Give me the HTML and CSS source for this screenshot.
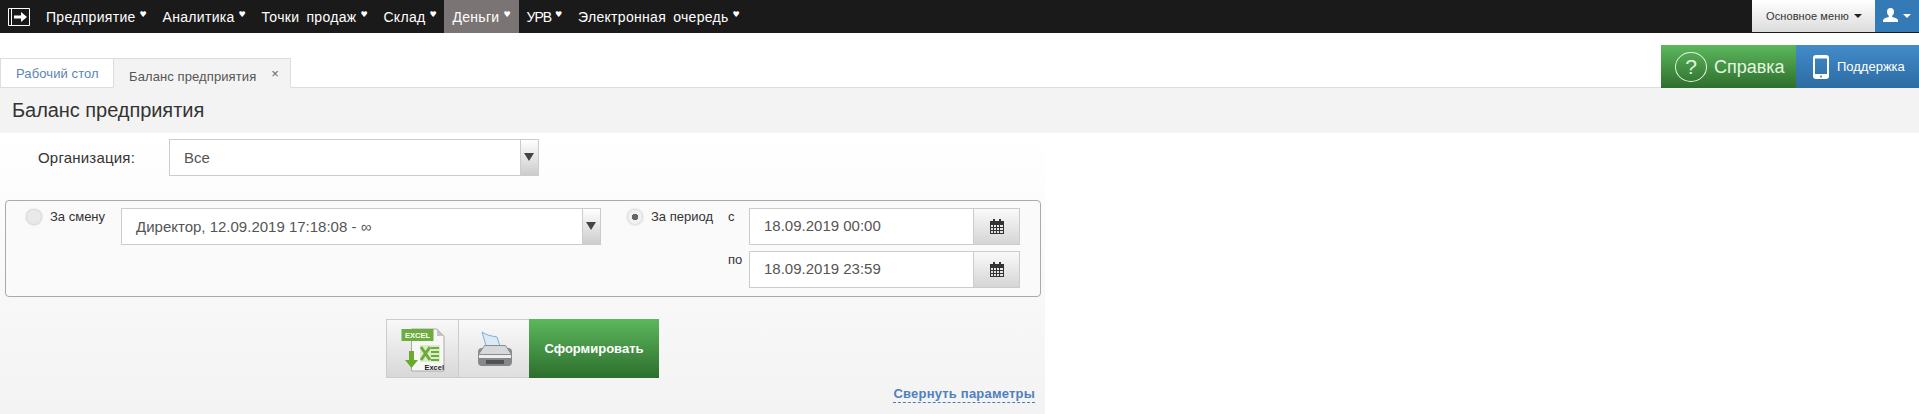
FILE: index.html
```html
<!DOCTYPE html>
<html lang="ru">
<head>
    <meta charset="UTF-8">
    <title>Баланс предприятия</title>
    <link rel="stylesheet" href="styles.css">
</head>
<body>
    <nav class="navbar">
        <a class="nav-logo">
            <svg width="22" height="18" viewBox="0 0 22 18">
                <path d="M.5.5h21v17H.5zM3.500.5v17" fill="none" stroke="#fff"/>
                <path d="M6 7.500h7V4l6 5-6 5v-3.500H6z" fill="#fff"/>
            </svg>
        </a>
        <ul class="nav-menu">
            <li class="nav-item">Предприятие</li>
            <li class="nav-item">Аналитика</li>
            <li class="nav-item">Точки продаж</li>
            <li class="nav-item">Склад</li>
            <li class="nav-item active">Деньги</li>
            <li class="nav-item nav-item-short">УРВ</li>
            <li class="nav-item">Электронная очередь</li>
        </ul>
        <button class="main-menu-btn">Основное меню<span class="caret-down"></span></button>
        <button class="user-btn">
            <svg width="15" height="14" viewBox="0 0 15 14">
                <path d="M7.500 0c2.300 0 3.500 1.700 3.500 3.800 0 1.800-.8 3.200-1.800 4v1.300c2 .5 5.300 1.300 5.800 3V14H0v-1.900c.5-1.700 3.800-2.500 5.800-3V7.800c-1-.8-1.800-2.200-1.800-4C4 1.700 5.200 0 7.500 0z" fill="#fff"/>
            </svg>
            <span class="caret-down light"></span>
        </button>
    </nav>

    <div class="tabbar">
        <div class="tabs">
            <a class="tab tab-home">Рабочий стол</a>
            <a class="tab tab-current">Баланс предприятия<span class="tab-close">×</span></a>
        </div>
        <div class="help-links">
            <a class="help-btn">
                <span class="help-circle">?</span>Справка
            </a>
            <a class="support-btn">
                <svg width="16" height="24" viewBox="0 0 16 24">
                    <path d="M3 0h10a3 3 0 0 1 3 3v18a3 3 0 0 1-3 3H3a3 3 0 0 1-3-3V3a3 3 0 0 1 3-3zM2 3.500v15.500h12V3.500z" fill="#fff" fill-rule="evenodd"/>
                    <circle cx="8" cy="21.500" r="1" fill="#337ab7"/>
                </svg>
                Поддержка
            </a>
        </div>
    </div>

    <h1 class="page-title">Баланс предприятия</h1>

    <main class="panel">
        <div class="org-row">
            <label class="org-label">Организация:</label>
            <div class="combo org-combo">
                <span class="combo-text">Все</span>
                <span class="combo-arrow"></span>
            </div>
        </div>

        <div class="period-box">
            <span class="radio"></span>
            <span class="radio-label shift-label">За смену</span>
            <div class="combo shift-combo">
                <span class="combo-text">Директор, 12.09.2019 17:18:08 - ∞</span>
                <span class="combo-arrow"></span>
            </div>
            <span class="radio checked"></span>
            <span class="radio-label period-label">За период</span>
            <div class="date-rows">
                <div class="date-row">
                    <span class="date-prefix">с</span>
                    <div class="date-field">
                        <span class="date-value">18.09.2019 00:00</span>
                        <span class="date-btn">
                            <svg width="14" height="15" viewBox="0 0 14 15">
                                <use href="#calendar"/>
                            </svg>
                        </span>
                    </div>
                </div>
                <div class="date-row">
                    <span class="date-prefix">по</span>
                    <div class="date-field">
                        <span class="date-value">18.09.2019 23:59</span>
                        <span class="date-btn">
                            <svg width="14" height="15" viewBox="0 0 14 15">
                                <use href="#calendar"/>
                            </svg>
                        </span>
                    </div>
                </div>
            </div>
        </div>

        <div class="actions">
            <button class="action-btn excel-btn">
                <svg width="46" height="46" viewBox="0 0 46 46">
                    <path d="M11.500 3H37l7 7v35H11.500z" fill="#f7f7f7" stroke="#a9a9a9"/>
                    <path d="M37 3v7h7z" fill="#c4c4c4"/>
                    <path d="M1.500 3h32v12h-32z" fill="#6cae3e"/>
                    <text x="17.500" y="12" class="excel-tag">EXCEL</text>
                    <rect x="20" y="19" width="20" height="17" fill="#dbeccb"/>
                    <path d="M21 34l9-13M21 21l9 13" stroke="#6aab3c" stroke-width="3"/>
                    <path d="M31 22h8M31 26h8M31 30h8M31 34h8" stroke="#6aab3c" stroke-width="2"/>
                    <path d="M9 25h5v9h4l-6.500 8L5 34h4z" fill="#6aab2e"/>
                    <text x="44" y="44" class="excel-name">Excel</text>
                </svg>
            </button>
            <button class="action-btn print-btn">
                <svg width="34" height="36" viewBox="0 0 34 36">
                    <path d="M4 1c4 3 9 4 15 5l4 12H9z" fill="#dbeaf7" stroke="#7fb0d8"/>
                    <rect x="0" y="17" width="34" height="18" rx="4" fill="#85898c"/>
                    <path d="M6.500 14.500h21l6 9H.5z" fill="#d6d8d9" stroke="#8a8d90"/>
                    <rect x="1" y="24" width="32" height="3" fill="#eeeeee"/>
                    <rect x="8" y="29" width="18" height="4" fill="#4f5356"/>
                </svg>
            </button>
            <button class="action-btn submit-btn">Сформировать</button>
        </div>

        <div class="collapse-row">
            <a class="collapse-link">Свернуть параметры</a>
        </div>
    </main>

    <svg class="svg-defs" width="0" height="0">
        <symbol id="calendar" viewBox="0 0 14 15">
            <path d="M0 2h3V0h2v2h4V0h2v2h3v13H0zM1 6v2h2V6zM4 6v2h2V6zM7 6v2h2V6zM10 6v2h3V6zM1 9v2h2V9zM4 9v2h2V9zM7 9v2h2V9zM10 9v2h3V9zM1 12v2h2v-2zM4 12v2h2v-2zM7 12v2h2v-2zM10 12v2h3v-2z" fill="#333" fill-rule="evenodd"/>
        </symbol>
    </svg>
</body>
</html>
```

FILE: styles.css
```css
* { box-sizing: border-box; }

body {
    margin: 0;
    font-family: "Liberation Sans", Arial, sans-serif;
    background: #fff;
    color: #333;
}

/* top bar */
.navbar {
    display: flex;
    align-items: stretch;
    height: 33px;
    background: #1a1a1a;
}

.nav-logo {
    display: flex;
    align-items: center;
    padding-left: 8px;
    width: 38px;
}

.nav-menu {
    display: flex;
    flex: 1;
    list-style: none;
    margin: 0;
    padding: 0;
}

.nav-item {
    display: flex;
    align-items: center;
    padding: 0 8px;
    color: #fff;
    font-size: 14px;
    letter-spacing: 0.3px;
    word-spacing: 3px;
    white-space: nowrap;
}

.nav-item::after {
    content: "♥";
    width: 7px;
    margin: -5px 0 0 4px;
    font-family: "DejaVu Sans", sans-serif;
    font-size: 8px;
    letter-spacing: 0;
}

.nav-item.active { background: #7a7574; }
.nav-item-short { letter-spacing: -1px; }

.main-menu-btn {
    width: 123px;
    height: 32px;
    padding: 0 0 0 14px;
    border: 0;
    background: linear-gradient(to bottom, #fff, #dcdcdc);
    color: #333;
    font: 11px "Liberation Sans", Arial, sans-serif;
    letter-spacing: 0.1px;
    text-align: left;
}

.caret-down {
    display: inline-block;
    margin-left: 5px;
    vertical-align: 2px;
    border-left: 4px solid transparent;
    border-right: 4px solid transparent;
    border-top: 4px solid #222;
}

.caret-down.light {
    margin-left: 2px;
    vertical-align: 4px;
    border-top-color: #fff;
}

.user-btn {
    width: 44px;
    height: 32px;
    padding: 0;
    border: 0;
    background: #337ab7;
}

/* tabs */
.tabbar {
    display: flex;
    justify-content: space-between;
    align-items: flex-end;
    height: 55px;
    border-bottom: 1px solid #ddd;
}

.tabs { display: flex; margin-bottom: -1px; }

.tab {
    display: block;
    height: 30px;
    padding-top: 7px;
    border: 1px solid #ddd;
    font-size: 13px;
    letter-spacing: 0.1px;
    white-space: nowrap;
}

.tab-home {
    width: 114px;
    padding-left: 15px;
    color: #5b85b0;
    background: #fff;
}

.tab-current {
    width: 178px;
    margin-left: -1px;
    padding-left: 15px;
    color: #555;
    background: #f3f3f3;
    border-bottom-color: #f3f3f3;
}

.tab-close {
    margin-left: 15px;
    color: #666;
    font-size: 13px;
    vertical-align: 3px;
}

.help-links { display: flex; height: 43px; margin-bottom: -1px; }

.help-btn {
    display: flex;
    align-items: center;
    width: 135px;
    padding: 1px 0 0 14px;
    background: linear-gradient(to bottom, #5cb85c, #2d6e2d);
    color: #e6f5e0;
    font-size: 18px;
}

.help-circle {
    width: 32px;
    height: 30px;
    margin-right: 7px;
    border: 1px solid #e6f5e0;
    border-radius: 50%;
    font-size: 21px;
    line-height: 28px;
    text-align: center;
}

.support-btn {
    display: flex;
    align-items: center;
    width: 123px;
    padding-left: 17px;
    background: linear-gradient(to bottom, #428bca, #2d6ca2);
    color: #fff;
    font-size: 13px;
    gap: 8px;
}

/* page */
.page-title {
    height: 45px;
    margin: 0;
    padding: 11px 12px 0;
    background: #f3f3f3;
    color: #333;
    font-size: 20px;
    font-weight: 400;
    letter-spacing: -0.05px;
}

.panel {
    width: 1045px;
    height: 281px;
    padding-top: 6px;
    background: linear-gradient(to bottom, #fff, #f3f3f3);
}

.org-row { display: flex; align-items: center; padding-left: 38px; }

.org-label { width: 131px; font-size: 15px; letter-spacing: 0.2px; }

.combo {
    display: flex;
    height: 37px;
    border: 1px solid #ccc;
    background: #fff;
}

.org-combo { width: 370px; }
.shift-combo { width: 480px; margin-left: 15px; }

.combo-text {
    flex: 1;
    padding: 9px 0 0 14px;
    color: #555;
    font-size: 15px;
    white-space: nowrap;
}

.combo-arrow {
    position: relative;
    width: 18px;
    background: linear-gradient(to bottom, #fff, #ccc);
    border-left: 1px solid #ccc;
}

.combo-arrow::after {
    content: "";
    position: absolute;
    top: 13px;
    left: 3px;
    border-left: 5px solid transparent;
    border-right: 5px solid transparent;
    border-top: 8px solid #444;
}

.period-box {
    display: flex;
    align-items: flex-start;
    width: 1036px;
    height: 97px;
    margin: 24px 0 0 5px;
    padding: 7px 0 0 20px;
    border: 1px solid #aaa;
    border-radius: 4px;
    background: #fafafa;
}

.radio {
    flex: none;
    width: 16px;
    height: 16px;
    margin-top: 1px;
    border: 1px solid #ddd;
    border-radius: 50%;
    background: #e9e9e9;
    box-shadow: 0 0 2px #ccc;
}

.radio.checked {
    margin-left: 26px;
    background: radial-gradient(circle, #666 0, #666 3px, #f1f1f1 3.500px);
}

.radio-label { margin: 1px 0 0 8px; font-size: 13px; white-space: nowrap; }
.shift-label { width: 56px; }
.period-label { width: 63px; }

.date-rows { display: flex; flex-direction: column; gap: 6px; margin-left: 14px; }

.date-row { display: flex; align-items: flex-start; }

.date-prefix { width: 21px; margin-top: 1px; font-size: 13px; }

.date-field {
    display: flex;
    width: 271px;
    height: 37px;
    border: 1px solid #ccc;
    background: #fff;
}

.date-value {
    flex: 1;
    padding: 8px 0 0 14px;
    color: #555;
    font-size: 15px;
}

.date-btn {
    display: flex;
    align-items: center;
    justify-content: center;
    width: 46px;
    background: linear-gradient(to bottom, #fafafa, #d5d5d5);
    border-left: 1px solid #ccc;
}

.svg-defs { position: absolute; }

/* buttons */
.actions { display: flex; justify-content: center; margin-top: 22px; }

.action-btn {
    display: flex;
    align-items: center;
    justify-content: center;
    height: 59px;
    padding: 0;
    border: 1px solid #ccc;
}

.excel-btn {
    width: 73px;
    background: linear-gradient(to bottom, #f8f8f8, #d8d8d8);
}

.print-btn {
    width: 71px;
    margin-left: -1px;
    padding-left: 2px;
    background: linear-gradient(to bottom, #fafafa, #dedede);
    border-right: 0;
}

.submit-btn {
    width: 130px;
    border: 0;
    background: linear-gradient(to bottom, #5cb85c, #2d6e2d);
    color: #fff;
    font: bold 13px "Liberation Sans", Arial, sans-serif;
}

.excel-tag { fill: #fff; font-size: 7.500px; font-weight: 700; text-anchor: middle; }
.excel-name { fill: #222; font-size: 7.500px; font-weight: 700; text-anchor: end; }

.collapse-row { display: flex; justify-content: flex-end; margin-top: 8px; padding-right: 10px; }

.collapse-link {
    padding-bottom: 1px;
    border-bottom: 1px dashed #4a7fb5;
    color: #4f81bd;
    font-size: 13px;
    font-weight: 700;
    letter-spacing: 0.2px;
}
```
